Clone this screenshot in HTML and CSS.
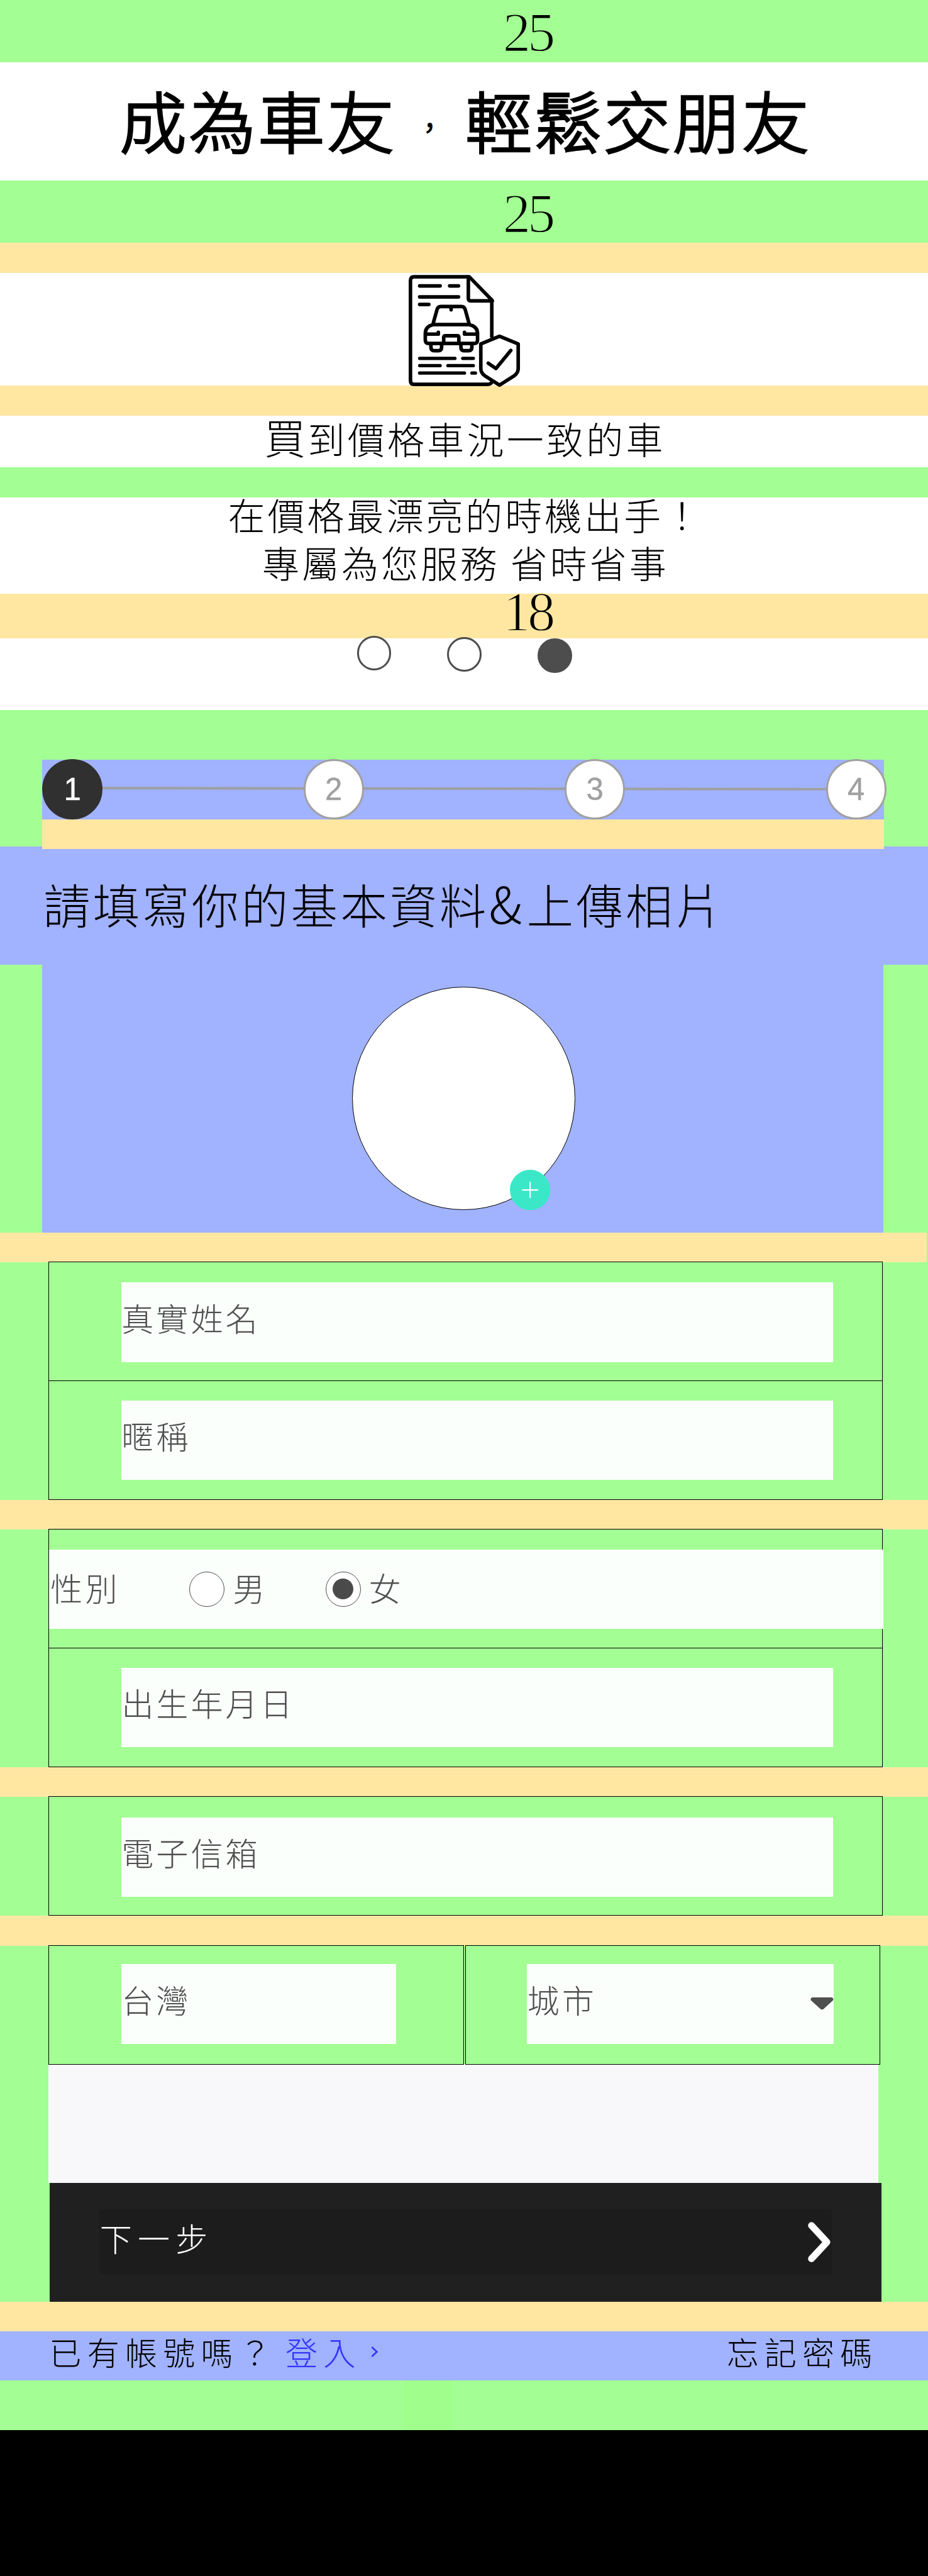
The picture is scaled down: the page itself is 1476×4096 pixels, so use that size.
FILE: index.html
```html
<!DOCTYPE html>
<html lang="zh-Hant-TW">
<head>
<meta charset="utf-8">
<title>成為車友，輕鬆交朋友</title>
<link rel="stylesheet" href="styles.css">
</head>
<body>
<div class="page">
  <header class="intro">
    <div class="band band-green band-25"><span class="measure">25</span></div>
    <h1 class="title">成為車友<span class="comma">，</span>輕鬆交朋友</h1>
    <div class="band band-green band-25"><span class="measure">25</span></div>
    <div class="band band-cream"></div>
    <div class="hero">
      <svg class="hero-icon" viewBox="0 0 190 190" fill="none" stroke="#000" stroke-width="6" stroke-linecap="round" stroke-linejoin="round">
        <path d="M140 107V45.500L102 6.500H9Q3 6.500 3 13V181Q3 187.500 9 187.500H134Q139 187.500 142 181"/>
        <path d="M100.500 7V43Q100.500 47 104 47H141"/>
        <path d="M18.500 21.800H53M69 21.800H84M18.500 40.300H84M18.500 53H34"/>
        <path d="M18.500 143.800H78M91 143.800H109M18.500 156H53M66 156H109M18.500 168.600H94M106.500 168.600H112.500" stroke-width="5.500"/>
        <path d="M41 86L48 61Q49.500 56.500 54 56.500H89Q93.500 56.500 95 61L102 86M71.500 57V62M41 87H102Q116 90 116 102V113Q116 118.700 110 118.700H34Q28 118.700 28 113V102Q28 90 41 87ZM29 103H50V100M115 103H94V100M59 118V109Q59 105.700 62 105.700H82Q84.500 105.700 84.500 109V118M37.500 119V125Q37.500 131 43 131H50Q55.500 131 55.500 125V119M88 119V125Q88 131 93 131H101Q106.500 131 106.500 125V119"/>
        <path d="M153 106.500L184.500 119.500V161Q184.500 168 178 173L153 189L128 173Q121.500 168 121.500 161V119.500Z" fill="#fff"/>
        <path d="M134 152L147 161L172 130.500"/>
      </svg>
    </div>
    <div class="band band-cream"></div>
    <p class="headline"><span class="headline-lead">買</span>到價格車況一致的車</p>
    <div class="band band-green band-12"></div>
    <div class="copy">
      <p>在價格最漂亮的時機出手！<br>專屬為您服務 省時省事</p>
    </div>
    <div class="band band-cream band-18"><span class="measure">18</span></div>
    <nav class="dots"><i class="dot"></i><i class="dot"></i><i class="dot dot-active"></i></nav>
  </header>

  <main class="register">
    <div class="steps-wrap">
      <ol class="steps">
        <li class="step step-active">1</li>
        <li class="step">2</li>
        <li class="step">3</li>
        <li class="step">4</li>
      </ol>
      <div class="steps-gap"></div>
    </div>
    <h2 class="section-title">請填寫你的基本資料<span class="amp">&amp;</span>上傳相片</h2>
    <div class="photo-area">
      <div class="photo">
        <svg class="photo-add" viewBox="0 0 68 68"><circle cx="34" cy="34" r="34" fill="#3ae8c8"/><path d="M34 20.500V47.500M20.500 34H47.500" stroke="#fff" stroke-width="2.200"/></svg>
      </div>
    </div>
    <div class="band band-cream band-first"></div>

    <section class="group">
      <div class="row"><div class="field">真實姓名</div></div>
      <div class="row row-next"><div class="field">暱稱</div></div>
    </section>
    <div class="band band-cream band-form"></div>
    <section class="group">
      <div class="row row-wide">
        <div class="field field-wide">
          <span class="gender-label">性別</span>
          <i class="radio"></i><span class="gender">男</span>
          <i class="radio radio-on"></i><span class="gender">女</span>
        </div>
      </div>
      <div class="row row-next"><div class="field">出生年月日</div></div>
    </section>
    <div class="band band-cream band-form"></div>
    <section class="group group-single">
      <div class="row"><div class="field">電子信箱</div></div>
    </section>
    <div class="band band-cream band-form"></div>
    <section class="group group-split">
      <div class="row row-country"><div class="field">台灣</div></div>
      <div class="row row-city"><div class="field field-select">城市
        <svg class="caret" viewBox="0 0 39 21"><path d="M3 0H36Q40 2 38 5L22 19.500Q19.500 21.500 17 19.500L1 5Q-1 2 3 0Z" fill="#4f4f4f"/></svg></div></div>
    </section>
    <div class="spacer"></div>
    <button class="next" type="button">
      <span class="next-inner">下一步
        <svg class="chevron" viewBox="0 0 40 68"><path d="M6 6L32 34L6 62" fill="none" stroke="#fff" stroke-width="11.500" stroke-linejoin="round" stroke-linecap="round"/></svg>
      </span>
    </button>
    <div class="band band-cream band-last"></div>
    <footer class="links">
      <span>已有帳號嗎？<a class="login">登入<svg class="login-arrow" viewBox="0 0 12 18"><path d="M1.500 1L10 9L1.500 17" fill="none" stroke="#3333ff" stroke-width="2.800"/></svg></a></span>
      <span>忘記密碼</span>
    </footer>
    <div class="tail"><div class="tail-mark"></div></div>
  </main>
</div>
</body>
</html>
```

FILE: styles.css
```css
:root {
  --green: #a3ff93;
  --cream: #ffe7a2;
  --blue: #a1b2ff;
  --field: #fbfffc;
  --ink: #4f4f4f;
}

/* 1rem = 10 design units */
html { font-size: 9.4427px; }

* { box-sizing: border-box; }

body {
  margin: 0;
  background: #000;
  color: #000;
  font-family: "Noto Sans CJK TC Light", "Noto Sans CJK TC", sans-serif;
  font-weight: 300;
}

.page { width: 100%; height: 4096px; background: #000; overflow: hidden; }
.intro { background: #fff; }
h1, h2, p, ol { margin: 0; padding: 0; }

.band { height: 5.05rem; }
.band-green { background: var(--green); }
.band-cream { background: var(--cream); }
.band-25, .band-18 { display: flex; align-items: center; padding-left: 84.7rem; }
.band-25 { height: 10.48rem; padding-top: .5rem; }
.band-18 { height: 7.55rem; padding-bottom: 1.5rem; }
.measure { font: 400 9.4rem/1 "Liberation Serif", serif; letter-spacing: -.55rem; -webkit-text-stroke: 1.8px var(--green); }
.band-18 .measure { -webkit-text-stroke-color: var(--cream); }

.title {
  display: flex;
  align-items: center;
  justify-content: center;
  height: 19.92rem;
  padding: 0 0 .8rem .5rem;
  font-size: 11.25rem;
  font-weight: 700;
  line-height: 1;
  letter-spacing: .4rem;
}
.comma { width: 11.65rem; padding-top: 2.4rem; font-size: 5rem; line-height: 1; text-align: center; }

.hero { height: 19.04rem; padding-left: 68.8rem; }
.hero-icon { display: block; width: 19rem; height: 19rem; overflow: visible; }

.headline, .copy {
  display: flex;
  justify-content: center;
  font-size: 6.25rem;
  letter-spacing: .42rem;
}
.headline { align-items: baseline; height: 8.71rem; padding-left: .3rem; line-height: 6.9rem; letter-spacing: .45rem; }
.headline-lead { font-size: 7rem; font-weight: 400; letter-spacing: .35rem; }
.band-12 { height: 5.03rem; }
.copy { height: 16.22rem; padding-left: .5rem; text-align: center; }
.copy p { margin-top: -1.2rem; line-height: 8.08rem; }

.dots { display: flex; gap: 9.43rem; height: 12.03rem; padding-left: 60.1rem; }
.dot { width: 5.8rem; height: 5.8rem; margin-top: -.41rem; border: 3px solid #4d4d4d; border-radius: 50%; background: #fff; }
.dot:nth-child(2) { margin-top: -.23rem; }
.dot-active { margin-top: 0; background: #4d4d4d; }

.register { background: var(--green); }
.steps-wrap { position: relative; z-index: 1; padding: 8.35rem 7.4rem 0 7.1rem; }
.steps { position: relative; display: flex; justify-content: space-between; height: 10.04rem; background: var(--blue); list-style: none; }
.steps::before { content: ""; position: absolute; left: 5rem; right: 5rem; top: 4.68rem; height: .45rem; background: #9f9f9f; transform: rotate(.08deg); }
.step {
  position: relative;
  display: flex;
  align-items: center;
  justify-content: center;
  width: 10.2rem;
  height: 10.2rem;
  margin-top: -.1rem;
  border: 3px solid #a0a0a0;
  border-radius: 50%;
  background: #fff;
  color: #a0a0a0;
  font: 400 5.2rem/1 "Liberation Sans", Arial, sans-serif;
  padding-top: .2rem;
  -webkit-text-stroke: .4px currentColor;
}
.step:last-child { margin-right: -.4rem; }
.step-active { border-color: #303030; background: #303030; color: #fff; }
.steps-gap { height: 5rem; background: var(--cream); }

.section-title {
  height: 19.93rem;
  margin-top: -.4rem;
  padding: 4.95rem 0 0 7.3rem;
  background: var(--blue);
  font-size: 7.9rem;
  font-weight: 300;
  line-height: 8.6rem;
  letter-spacing: .44rem;
}
.amp { font-size: 8.6rem; line-height: 1; letter-spacing: .8rem; }

.photo-area { display: flex; justify-content: center; height: 45.06rem; margin: 0 7.5rem 0 7.05rem; padding: 3.7rem 0 0 .4rem; background: var(--blue); }
.photo { position: relative; width: 37.6rem; height: 37.6rem; border: 1px solid #000; border-radius: 50%; background: #fff; }
.photo-add { position: absolute; right: 4.1rem; bottom: -.1rem; width: 6.8rem; height: 6.8rem; }
.band-first { width: 156.1rem; }
.band-form { height: 5.02rem; }

.group { position: relative; margin: -.1rem 7.6rem -.05rem 8.2rem; }
.group-single { margin-bottom: 0; }
.row { height: 20.1rem; padding: 3.4rem 8.3rem 0 12.1rem; border: 1px solid #000; background: var(--green); }
.row-next { height: 20.15rem; margin-top: -1px; padding-top: 3.25rem; }
.row-wide { padding: 3.3rem 0 0; }
.field {
  display: flex;
  align-items: center;
  height: 13.4rem;
  padding: 0 0 1.5rem .05rem;
  background: var(--field);
  color: var(--ink);
  font-size: 5.42rem;
  line-height: 1;
  letter-spacing: .42rem;
}
.field-wide { margin-right: -.2rem; padding-left: .2rem; padding-bottom: 0; }
.gender-label, .gender { margin-bottom: .5rem; }
.gender-label { width: 23.4rem; }
.radio { display: grid; place-items: center; width: 5.95rem; height: 5.95rem; border: 1px solid #4a4a4a; border-radius: 50%; background: #fff; }
.gender { width: 15.4rem; padding-left: 1.35rem; margin-right: 1.57rem; }
.radio-on::after { content: ""; width: 3.5rem; height: 3.5rem; border-radius: 50%; background: #4a4a4a; }

.group-split { display: flex; gap: .2rem; margin-right: 8.1rem; }
.group-split .row { padding-top: 3.1rem; }
.row-country { width: 69.95rem; padding-right: 11.35rem; }
.row-city { flex: 1; padding: 0 7.65rem 0 10.3rem; }
.field-select { justify-content: space-between; padding-right: 0; }
.caret { width: 3.9rem; height: 2.1rem; margin-top: 1.4rem; }

.spacer { height: 19.96rem; margin: 0 8.4rem 0 8.2rem; background: #f8f8fb; }
.next {
  display: flex;
  align-items: flex-start;
  width: 140.1rem;
  height: 20.05rem;
  margin: 0 0 0 8.35rem;
  padding: 4.55rem 8.35rem 0;
  border: 0;
  background: #202020;
}
.next-inner {
  flex: 1;
  display: flex;
  align-items: center;
  justify-content: space-between;
  height: 10.9rem;
  padding: 0 0 1.3rem .1rem;
  background: #1c1c1c;
  color: #fff;
  font: 300 5.42rem/1 "Noto Sans CJK TC Light", "Noto Sans CJK TC", sans-serif;
  letter-spacing: .97rem;
}
.chevron { width: 4rem; height: 6.8rem; margin-top: 1.3rem; }

.band-last { height: 4.96rem; }
.links {
  display: flex;
  justify-content: space-between;
  height: 8.33rem;
  padding: .55rem 8.4rem 0 8.3rem;
  background: var(--blue);
  font-size: 5.42rem;
  line-height: 5.8rem;
  letter-spacing: .97rem;
}
.login { margin-left: 1.45rem; color: #3333ff; }
.login-arrow { width: 1.2rem; height: 1.8rem; margin-left: 1.6rem; vertical-align: 1.4rem; }
.tail { height: 8.38rem; padding-left: 68rem; }
.tail-mark { width: 8.3rem; height: 100%; background: #a0ff8c; }
```
